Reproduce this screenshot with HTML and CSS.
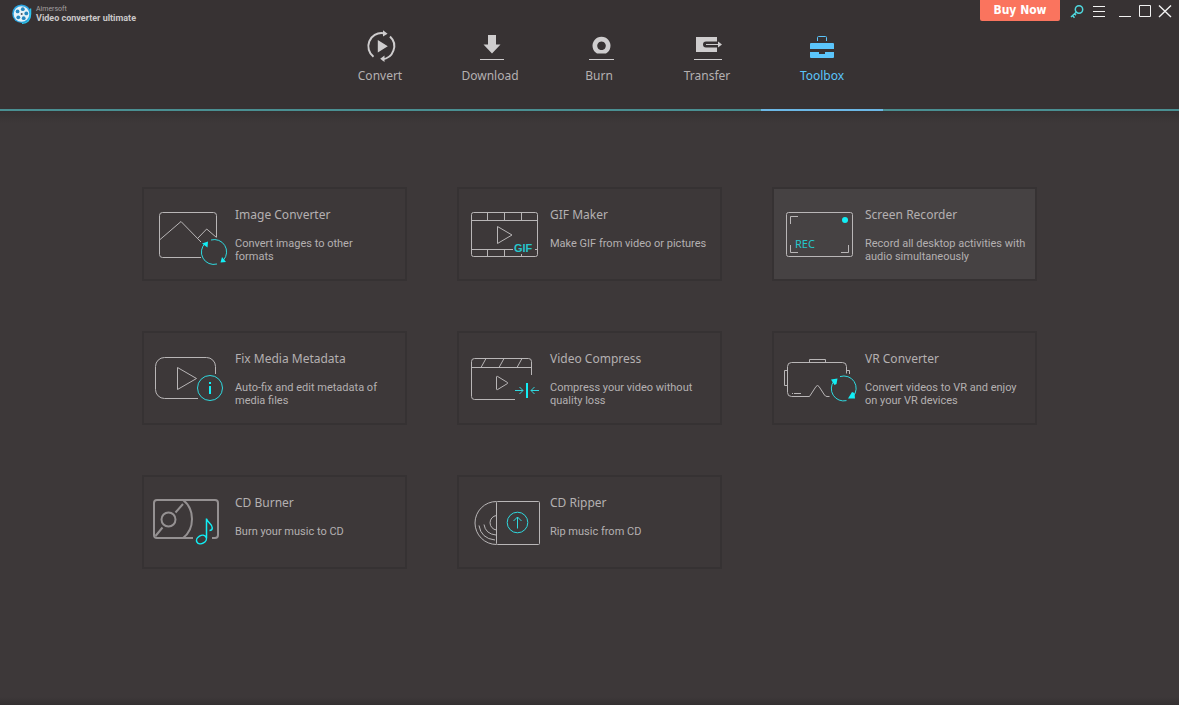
FILE: index.html
```html
<!DOCTYPE html>
<html lang="en">
<head>
<meta charset="utf-8">
<title>Aimersoft Video converter ultimate</title>
<link rel="stylesheet" href="styles.css">
</head>
<body>
<div class="app">
  <header class="header">
    <div class="titlebar">
      <div class="brand">
        <svg class="brand-logo" viewBox="0 0 20 20" aria-hidden="true">
          <circle cx="9.500" cy="9.700" r="9.300" fill="#2aa3e0"/>
          <path d="M10 19.200c5 .3 8.500-3.200 8.500-9.200V4.500" fill="none" stroke="#2bc4ee" stroke-width="1.500"/>
          <circle cx="9.500" cy="10" r="7.800" fill="#e4f2f8"/>
          <circle cx="10.800" cy="5.200" r="1.900" fill="#2586bd"/>
          <circle cx="14.300" cy="9.400" r="1.900" fill="#2586bd"/>
          <circle cx="11.700" cy="14.200" r="1.900" fill="#2586bd"/>
          <circle cx="6.300" cy="13.300" r="1.900" fill="#2586bd"/>
          <circle cx="5.600" cy="7.400" r="1.900" fill="#2586bd"/>
          <circle cx="9.700" cy="10" r="1" fill="#4a5560"/>
        </svg>
        <div class="brand-text">
          <span class="brand-company">Aimersoft</span>
          <h1 class="brand-product">Video converter ultimate</h1>
        </div>
      </div>
      <div class="actions">
        <button class="buy" type="button">Buy Now</button>
        <button class="tool tool-key" type="button" aria-label="Register">
          <svg viewBox="0 0 14 20"><g fill="none" stroke="#4fd8de" stroke-width="1.500"><circle cx="9" cy="8.500" r="3.700"/><path d="M6.200 11.200L1 16M2.500 14.500l2 2.200M4.500 12.700l1.500 1.600"/></g></svg>
        </button>
        <button class="tool" type="button" aria-label="Menu">
          <svg viewBox="0 0 14 20"><path d="M1 5.500h12M1 10.500h12M1 15.500h12" stroke="#f2f2f2"/></svg>
        </button>
        <div class="window-controls">
          <button class="tool" type="button" aria-label="Minimize">
            <svg viewBox="0 0 14 20"><path d="M1 15.500h12" stroke="#f2f2f2"/></svg>
          </button>
          <button class="tool" type="button" aria-label="Maximize">
            <svg viewBox="0 0 14 20"><path d="M1.500 4.500h11v11h-11z" fill="none" stroke="#f2f2f2"/></svg>
          </button>
          <button class="tool" type="button" aria-label="Close">
            <svg viewBox="0 0 14 20"><path d="M1 4.500l12 11.500M13 4.500L1 16" stroke="#f2f2f2" stroke-width="1.400"/></svg>
          </button>
        </div>
      </div>
    </div>
    <nav class="tabs" aria-label="Sections">
      <button class="tab" type="button">
        <svg class="tab-icon" viewBox="0 0 40 36" aria-hidden="true">
          <g fill="none" stroke="#cfcdce" stroke-width="2"><path d="M13.500 28.800A13.200 13.200 0 0 1 23 5.200M30 8.500A13.200 13.200 0 0 1 22 31.300"/></g>
          <path d="M17.800 12v12.500l10-6.200zM23 2.200l4.600 3.500-4.600 2.800zM24.500 27.500v6.500l-4.300-3.300z" fill="#cfcdce"/>
        </svg>
        <span>Convert</span>
      </button>
      <button class="tab" type="button">
        <svg class="tab-icon" viewBox="0 0 40 36" aria-hidden="true">
          <path d="M18 7h8v9.500h4.500L22 25.500l-8.500-9H18z" fill="#cfcdce"/><path d="M10 31.500h24" stroke="#cfcdce"/>
        </svg>
        <span>Download</span>
      </button>
      <button class="tab" type="button">
        <svg class="tab-icon" viewBox="0 0 40 36" aria-hidden="true">
          <path fill-rule="evenodd" d="M18 25.500A9 9 0 1 1 27 25.500zM22.500 13.500a4.300 4.300 0 1 0 .01 0z" fill="#cfcdce"/><path d="M10 31.500h25" stroke="#cfcdce"/>
        </svg>
        <span>Burn</span>
      </button>
      <button class="tab" type="button">
        <svg class="tab-icon" viewBox="0 0 40 36" aria-hidden="true">
          <path d="M9 9h21v4.500H19a3 3 0 0 0 0 6H30v4.500H9z" fill="#cfcdce"/><path d="M19 16.500h13M7 31.500h28" stroke="#cfcdce"/><path d="M31 13.500l4 3-4 3z" fill="#cfcdce"/>
        </svg>
        <span>Transfer</span>
      </button>
      <button class="tab tab-active" type="button" aria-current="page">
        <svg class="tab-icon" viewBox="0 0 40 36" aria-hidden="true">
          <path d="M15.500 13V9.500a1 1 0 0 1 1-1h7a1 1 0 0 1 1 1V13" fill="none" stroke="#5bc5fb"/>
          <path d="M8 16a1 1 0 0 1 1-1h22a1 1 0 0 1 1 1v5H8zM8 24h9v2h6v-2h9v5a1 1 0 0 1-1 1H9a1 1 0 0 1-1-1z" fill="#5bc5fb"/>
        </svg>
        <span>Toolbox</span>
      </button>
    </nav>
  </header>

  <main class="content">
    <div class="cards">
      <a class="card" href="#image-converter">
        <svg class="card-icon" viewBox="0 0 90 90" aria-hidden="true">
          <g class="line"><path d="M57 68.500H18.500a3 3 0 0 1-3-3v-39a3 3 0 0 1 3-3h51a3 3 0 0 1 3 3V48"/><path d="M15.500 51L37 32.500 57 53M53.500 49.500l9.200-9.500 9.800 8.500"/></g>
          <g class="accent-line"><path d="M67 51a12.300 12.300 0 0 1 12.500 20M73 75A12.300 12.300 0 0 1 61.500 54"/></g>
          <path class="accent" d="M58 54.500l6-2-.5 6zM76.500 73.500l5.500-.5-4-5z"/>
        </svg>
        <div class="card-text"><h2>Image Converter</h2><p>Convert images to other<br>formats</p></div>
      </a>
      <a class="card" href="#gif-maker">
        <svg class="card-icon" viewBox="0 0 90 90" aria-hidden="true">
          <g class="line"><rect x="12.500" y="23.500" width="66" height="44" rx="2"/><path d="M12.500 31.500h66M12.500 60.500H54M76 60.500h2M28.500 23.500v8M45.500 23.500v8M62.500 23.500v8M28.500 60.500v7M45.500 60.500v7M62.500 65v2M38.500 37.500v17l14.500-8.500z"/></g>
          <text class="gif-label" x="55" y="63">GIF</text>
        </svg>
        <div class="card-text"><h2>GIF Maker</h2><p>Make GIF from video or pictures</p></div>
      </a>
      <a class="card card-hover" href="#screen-recorder">
        <svg class="card-icon" viewBox="0 0 90 90" aria-hidden="true">
          <g class="line"><rect x="12.500" y="23.500" width="66" height="44" rx="2"/><path d="M16.500 35v-7.500H24M16.500 56v7.500H24M74.500 56v7.500H67"/></g>
          <circle class="accent" cx="71" cy="31" r="3"/>
          <text class="rec-label" x="21" y="59">REC</text>
        </svg>
        <div class="card-text"><h2>Screen Recorder</h2><p>Record all desktop activities with<br>audio simultaneously</p></div>
      </a>
      <a class="card" href="#fix-metadata">
        <svg class="card-icon" viewBox="0 0 90 90" aria-hidden="true">
          <g class="line"><path d="M54 65.500H20.500a9 9 0 0 1-9-9v-23a9 9 0 0 1 9-9h42a9 9 0 0 1 9 9V41"/><path d="M33.500 34.500v22l19-11z"/></g>
          <circle class="accent-line" cx="66" cy="55" r="12.500"/>
          <path class="accent" d="M65 49h2v2h-2zM65 53h2v8h-2z"/>
        </svg>
        <div class="card-text"><h2>Fix Media Metadata</h2><p>Auto-fix and edit metadata of<br>media files</p></div>
      </a>
      <a class="card" href="#video-compress">
        <svg class="card-icon" viewBox="0 0 90 90" aria-hidden="true">
          <g class="line"><path d="M56 66.500H15.500a3 3 0 0 1-3-3v-35a3 3 0 0 1 3-3h54a3 3 0 0 1 3 3V42M12.500 34.500h60M27 25.500l-5 9M45 25.500l-5 9M63 25.500l-5 9"/><path d="M37.500 44v12a.7.7 0 0 0 1 .6L48.500 50.500a.7.7 0 0 0 0-1L38.500 43.400a.7.7 0 0 0-1 .6z"/></g>
          <g class="accent-line"><path d="M56 57.500h8M60.500 54l3.500 3.500-3.500 3.500M80 57.500h-8M75.500 54L72 57.500l3.500 3.500"/></g>
          <path class="accent" d="M67 50h2v15h-2z"/>
        </svg>
        <div class="card-text"><h2>Video Compress</h2><p>Compress your video without<br>quality loss</p></div>
      </a>
      <a class="card" href="#vr-converter">
        <svg class="card-icon" viewBox="0 0 90 90" aria-hidden="true">
          <g class="line"><path d="M55.500 63.500H53q-1.500 0-2.500-1.500L45 53.500q-1.500-2-3 0L35.500 63.500H17.500a4 4 0 0 1-4-4v-26a4 4 0 0 1 4-4h51a4 4 0 0 1 4 4v7M72.500 37.500h3V41M13.500 37.500h-3v15h3M35.500 29.500v-3h16v3M18 60.500h1M20 60.500h7"/></g>
          <g class="accent-line"><path d="M66 43.600A12.300 12.300 0 0 1 79 63.500M72.500 67.600A12.300 12.300 0 0 1 60 48"/></g>
          <path class="accent" d="M57 46.500l6.500-1-1 5.500-2 1zM74 65.500l7 0-.5-5.500-2.500-1z"/>
        </svg>
        <div class="card-text"><h2>VR Converter</h2><p>Convert videos to VR and enjoy<br>on your VR devices</p></div>
      </a>
      <a class="card" href="#cd-burner">
        <svg class="card-icon" viewBox="0 0 90 90" aria-hidden="true">
          <g class="line line-bold"><path d="M49 61H13a3 3 0 0 1-3-3V26a3 3 0 0 1 3-3h58a3 3 0 0 1 3 3v32a3 3 0 0 1-3 3h-3"/><circle cx="24.500" cy="42.500" r="7"/><path d="M39 23c12 9 12 29 0 38M11.500 59l7-8.500M31.500 35.500l7.500-8.500"/></g>
          <g class="accent-line accent-bold"><ellipse cx="57.500" cy="62.500" rx="5.200" ry="4" transform="rotate(-30 57.500 62.500)"/><path d="M62.500 61V41.500c.5 4 6 5.500 5.800 9.500-.1 1.500-1 2.500-2.800 2.500"/></g>
        </svg>
        <div class="card-text"><h2>CD Burner</h2><p>Burn your music to CD</p></div>
      </a>
      <a class="card" href="#cd-ripper">
        <svg class="card-icon" viewBox="0 0 90 90" aria-hidden="true">
          <g class="line"><rect x="37.500" y="24.500" width="43" height="43" rx="1"/><path d="M37.500 24.500a21.500 21.500 0 0 0 0 43M37.500 38.500a7.300 7.300 0 0 0 0 14.500M25 47.500q1.500 9.500 12 10.500M20 48.500q2 13 16 14.500"/></g>
          <g class="accent-line"><circle cx="58.500" cy="45.500" r="10.300"/><path d="M58.500 51.500V40M54.500 44l4-4 4 4"/></g>
        </svg>
        <div class="card-text"><h2>CD Ripper</h2><p>Rip music from CD</p></div>
      </a>
    </div>
  </main>
</div>
</body>
</html>
```
FILE: styles.css
```css
* { box-sizing: border-box; }

body {
  margin: 0;
  background: #3d3839;
  color: #b4b0b1;
  font-family: "Noto Sans", "Open Sans", sans-serif;
}

button {
  padding: 0;
  border: 0;
  background: none;
  color: inherit;
  font: inherit;
}

svg { display: block; }

.app {
  min-height: 100vh;
  display: flex;
  flex-direction: column;
  background: linear-gradient(to top, #343031, #3d3839 8px);
}

.header {
  background: #373233;
  border-bottom: 2px solid #4a8f92;
}

.titlebar {
  height: 24px;
  display: flex;
  justify-content: space-between;
  align-items: flex-start;
  padding: 0 7px 0 12px;
}

.brand {
  display: flex;
  gap: 4px;
  padding-top: 4px;
}

.brand-logo { width: 20px; height: 20px; }

.brand-text {
  display: flex;
  flex-direction: column;
  font-family: Roboto, sans-serif;
}

.brand-company {
  font-size: 7px;
  line-height: 10px;
  color: #a5a1a2;
}

.brand-product {
  margin: 0;
  font-size: 9px;
  line-height: 9px;
  font-weight: 700;
  color: #cac7c8;
}

.actions {
  display: flex;
  gap: 8px;
}

.buy {
  width: 80px;
  height: 21px;
  margin-right: 2px;
  border-radius: 0 0 2px 2px;
  background: #fa745e;
  color: #fff;
  font-size: 12px;
  line-height: 21px;
  font-weight: 700;
  font-family: "DejaVu Sans Condensed", "DejaVu Sans", sans-serif;
}

.tool svg { width: 14px; height: 20px; }

.window-controls {
  display: flex;
  gap: 6px;
  margin-left: 4px;
}

.tabs {
  display: flex;
  justify-content: center;
  padding-left: 29px;
}

.tab {
  width: 110px;
  height: 87px;
  margin-bottom: -2px;
  padding-top: 4px;
  display: flex;
  flex-direction: column;
  align-items: center;
  gap: 3px;
  border-bottom: 2px solid transparent;
  font-size: 12px;
  line-height: 18px;
}

.tab:nth-child(3),
.tab:nth-child(4) { width: 108px; }

.tab-active {
  width: 122px;
  color: #5bc5fb;
  border-bottom-color: #6cb8e6;
}

.tab-icon { width: 40px; height: 36px; }

.content {
  flex: 1;
  padding: 76px 24px 48px;
  background: linear-gradient(#353132, transparent 12px);
}

.cards {
  max-width: 895px;
  margin: 0 auto;
  display: grid;
  grid-template-columns: repeat(3, minmax(0, 1fr));
  gap: 50px;
}

.card {
  min-height: 94px;
  display: flex;
  gap: 1px;
  border: 2px solid #363233;
  color: inherit;
  text-decoration: none;
}

.card-hover { background: #464243; }

.card-icon { flex: none; width: 90px; height: 90px; }

.card-text { padding-top: 16px; }

.card h2 {
  margin: 0 0 12px;
  font-size: 12px;
  line-height: 20px;
  font-weight: 400;
}

.card p {
  margin: 0;
  font-family: Roboto, sans-serif;
  font-size: 11px;
  line-height: 13px;
}

.line { fill: none; stroke: #b9b6b7; }
.line-bold { stroke: #959192; stroke-width: 2; }
.accent { fill: #12eef5; }
.accent-line { fill: none; stroke: #2fd9df; }
.accent-bold { stroke: #12eef5; stroke-width: 1.5; }

.gif-label {
  fill: #25c6cb;
  font: 700 11px "Liberation Sans", sans-serif;
}

.rec-label {
  fill: #25c6cb;
  font-size: 11px;
}
```
